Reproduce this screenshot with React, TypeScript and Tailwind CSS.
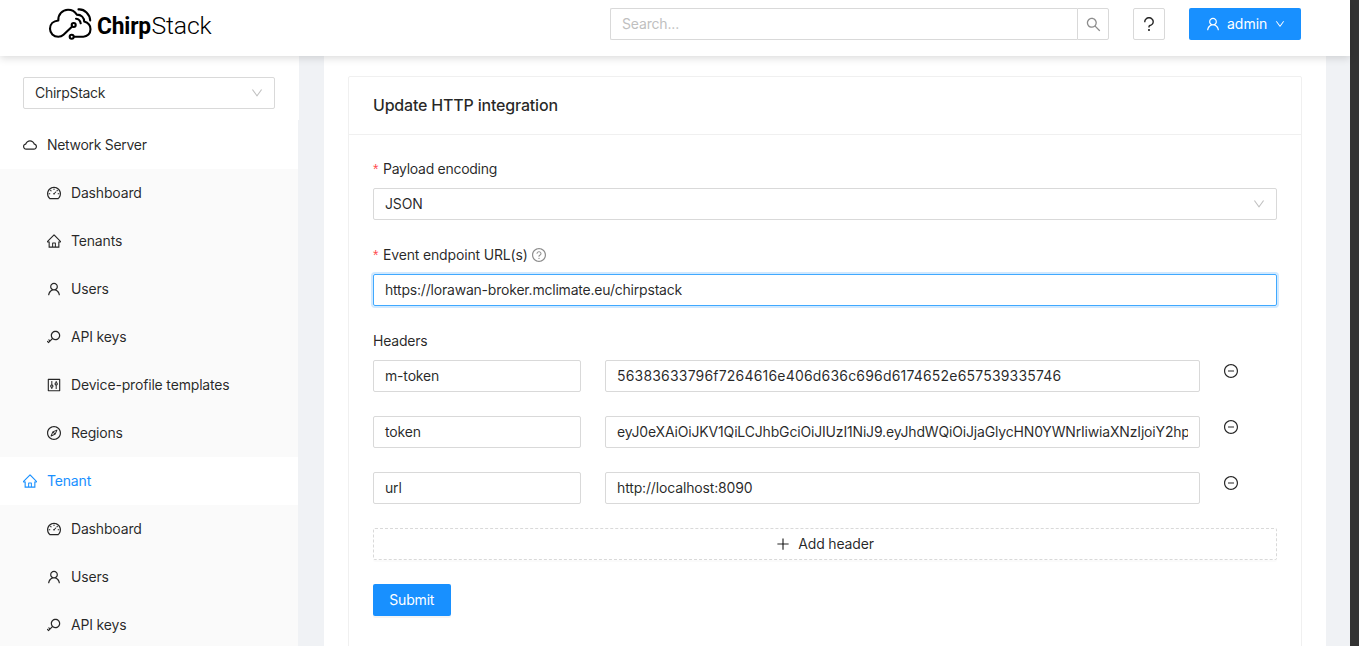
import type { ReactNode } from "react";
import type { IconType } from "react-icons";
import {
  AiOutlineCloud,
  AiOutlineCompass,
  AiOutlineControl,
  AiOutlineDashboard,
  AiOutlineDown,
  AiOutlineHome,
  AiOutlineKey,
  AiOutlineMinusCircle,
  AiOutlinePlus,
  AiOutlineQuestion,
  AiOutlineQuestionCircle,
  AiOutlineSearch,
  AiOutlineUser,
} from "react-icons/ai";

function Logo() {
  return (
    <svg width="166" height="40" viewBox="0 0 166 40" aria-label="ChirpStack">
      <g fill="none" stroke="#000" strokeWidth="2.1" strokeLinecap="round" strokeLinejoin="round">
        <path d="M24.200 22.500 15.500 30.800C14 32.200 12.500 32.800 10.300 32.800 5.500 32.800 2 29.200 2 24.800 2 20.300 5.300 16.900 10.300 16.500 10 10.500 14.300 5.700 20 5.700 24 5.700 27 7.600 28.700 10.600 33.400 10.700 36.200 13.600 36.200 17.600 40.200 18.700 42.500 21.700 42.500 25.300 42.500 29.500 39.500 32.700 35.300 32.700H26" />
        <circle cx="25.700" cy="21" r="2" />
        <circle cx="23.700" cy="32.800" r="2" />
        <path d="M28 14.700C30.600 15 32.300 16.700 32.700 19.300M30.500 5.400C36.500 4.800 42 10.400 42.200 16.500" />
      </g>
      <text x="49" y="30" fontFamily="Roboto, sans-serif" fontWeight="700" fontSize="24.500" textLength="54" lengthAdjust="spacingAndGlyphs">Chirp</text>
      <text x="103.500" y="30" fontFamily="Roboto, sans-serif" fontWeight="300" fontSize="24.500" textLength="60" lengthAdjust="spacingAndGlyphs">Stack</text>
    </svg>
  );
}

// The glyphs carry a 64-unit margin on every side; this crops it away.
function Icon({ of: Glyph, size = 14, className = "" }: { of: IconType; size?: number; className?: string }) {
  return <Glyph size={size} viewBox="64 64 896 896" className={`shrink-0 ${className}`} />;
}

type Entry = { icon: IconType; label: string };

const networkItems: Entry[] = [
  { icon: AiOutlineDashboard, label: "Dashboard" },
  { icon: AiOutlineHome, label: "Tenants" },
  { icon: AiOutlineUser, label: "Users" },
  { icon: AiOutlineKey, label: "API keys" },
  { icon: AiOutlineControl, label: "Device-profile templates" },
  { icon: AiOutlineCompass, label: "Regions" },
];

const tenantItems: Entry[] = [
  { icon: AiOutlineDashboard, label: "Dashboard" },
  { icon: AiOutlineUser, label: "Users" },
  { icon: AiOutlineKey, label: "API keys" },
];

function MenuTitle({ icon, label, active }: Entry & { active?: boolean }) {
  return (
    <div className={`flex h-12 items-center gap-2.5 bg-white pl-[23px] ${active ? "text-[#1890ff]" : ""}`}>
      <Icon of={icon} />
      <span className={active ? "" : "tracking-[-0.3px]"}>{label}</span>
    </div>
  );
}

function SubMenu({ items }: { items: Entry[] }) {
  return (
    <ul className="bg-[#fafafa]">
      {items.map(({ icon, label }) => (
        <li key={label} className="flex h-12 items-center gap-2.5 pl-[47px]">
          <Icon of={icon} />
          <span>{label}</span>
        </li>
      ))}
    </ul>
  );
}

function Label({ required, children }: { required?: boolean; children: ReactNode }) {
  return (
    <div className="flex h-[22px] items-center tracking-[-0.21px]">
      {required && <span className="mr-1 w-1.5 font-['Liberation_Sans'] text-sm text-[#ff4d4f]">*</span>}
      {children}
    </div>
  );
}

const box = "flex h-8 items-center rounded-[2px] border border-[#d9d9d9] bg-white px-[11px]";

const headers = [
  { name: "m-token", value: "56383633796f7264616e406d636c696d6174652e657539335746", tracking: "tracking-[0.19px]" },
  { name: "token", value: "eyJ0eXAiOiJKV1QiLCJhbGciOiJIUzI1NiJ9.eyJhdWQiOiJjaGlycHN0YWNrIiwiaXNzIjoiY2hpcnBzdGFjayIs", tracking: "tracking-[-0.17px]" },
  { name: "url", value: "http://localhost:8090", tracking: "tracking-[-0.15px]" },
];

export default function App() {
  return (
    <div className="flex h-[646px] w-[1359px] overflow-hidden bg-[#333] font-[Inter,sans-serif] text-sm leading-[22px] tracking-[-0.17px] text-black/85">
      <div className="flex w-[1350px] flex-col bg-[#f0f2f5]">
        <header className="relative z-10 flex h-14 shrink-0 items-start bg-white pr-[49px] pl-12 shadow-[0_2px_8px_rgba(0,0,0,0.15)]">
          <div className="mt-1 h-10"><Logo /></div>
          <div className="mt-2 ml-auto flex">
            <div className={`${box} w-[467px] rounded-r-none border-r-0 text-[#bfbfbf]`}>Search...</div>
            <div className="flex size-8 items-center justify-center rounded-r-[2px] border border-[#d9d9d9] text-black/45">
              <Icon of={AiOutlineSearch} size={15} />
            </div>
          </div>
          <button className="mt-2 ml-6 flex size-8 items-center justify-center rounded-[2px] border border-[#d9d9d9]">
            <Icon of={AiOutlineQuestion} size={16} />
          </button>
          <button className="mt-2 ml-6 flex h-8 w-28 items-center rounded-[2px] bg-[#1890ff] pl-[17px] tracking-normal text-white">
            <Icon of={AiOutlineUser} />
            <span className="ml-[7px]">admin</span>
            <Icon of={AiOutlineDown} size={10} className="ml-2" />
          </button>
        </header>
        <div className="flex min-h-0 flex-1">
          <aside className="w-[298px] shrink-0 bg-white pt-[21px]">
            <div className={`${box} mb-3 ml-[23px] w-[252px] justify-between tracking-[-0.3px]`}>
              ChirpStack
              <Icon of={AiOutlineDown} size={12} className="text-black/25" />
            </div>
            <MenuTitle icon={AiOutlineCloud} label="Network Server" />
            <SubMenu items={networkItems} />
            <MenuTitle icon={AiOutlineHome} label="Tenant" active />
            <SubMenu items={tenantItems} />
          </aside>
          <div className="h-16 w-px shrink-0 bg-white" />
          <main className="ml-[25px] w-[1002px] bg-white px-6 pt-5">
            <section className="h-[620px] rounded-[2px] border border-[#f0f0f0]">
              <h1 className="flex h-[58px] items-center border-b border-[#f0f0f0] px-6 pb-0.5 text-base font-medium tracking-[-0.19px]">Update HTTP integration</h1>
              <div className="flex flex-col px-6 pt-[23px]">
                <Label required><span className="tracking-[-0.28px]">Payload encoding</span></Label>
                <div className={`${box} mt-2 justify-between`}>
                  JSON
                  <Icon of={AiOutlineDown} size={12} className="text-black/25" />
                </div>
                <div className="mt-6">
                  <Label required>
                    <span className="tracking-[-0.16px]">Event endpoint URL(s)</span>
                    <Icon of={AiOutlineQuestionCircle} className="ml-1 text-black/45" />
                  </Label>
                </div>
                <div className="mt-2 flex h-8 items-center rounded-[2px] border border-[#40a9ff] px-[11px] tracking-[-0.205px] shadow-[0_0_0_2px_rgba(24,144,255,0.2)]">
                  https://lorawan-broker.mclimate.eu/chirpstack
                </div>
                <div className="mt-6 mb-2"><Label>Headers</Label></div>
                {headers.map(({ name, value, tracking }) => (
                  <div key={name} className="mb-6 flex">
                    <div className={`${box} w-52`}>{name}</div>
                    <div className={`${box} ml-6 w-[594.5px]`}>
                      <span className={`overflow-hidden whitespace-nowrap ${tracking}`}>{value}</span>
                    </div>
                    <Icon of={AiOutlineMinusCircle} className="mt-1 ml-[24.5px]" />
                  </div>
                ))}
                <button className="flex h-8 items-center justify-center gap-2 rounded-[2px] border border-dashed border-[#d9d9d9] shadow-[0_2px_0_rgba(0,0,0,0.016)]">
                  <Icon of={AiOutlinePlus} />
                  Add header
                </button>
                <button className="mt-6 h-8 w-[77.5px] rounded-[2px] bg-[#1890ff] text-white shadow-[0_2px_0_rgba(0,0,0,0.045)]">Submit</button>
              </div>
            </section>
          </main>
        </div>
      </div>
    </div>
  );
}
